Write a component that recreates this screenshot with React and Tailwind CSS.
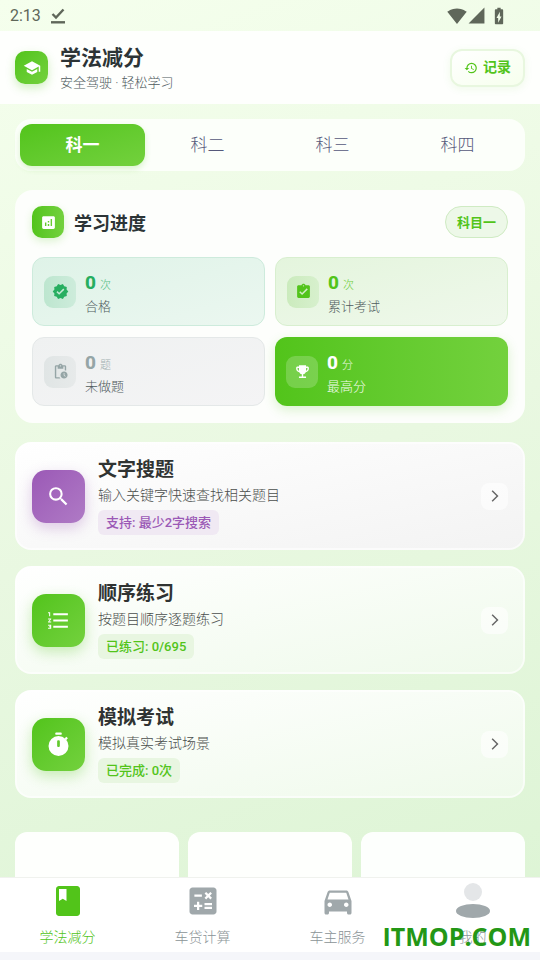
import { useState } from "react";
import {
  MdAnalytics,
  MdAssignmentTurnedIn,
  MdBatteryChargingFull,
  MdCalculate,
  MdClass,
  MdDirectionsCar,
  MdEmojiEvents,
  MdFormatListNumbered,
  MdHistory,
  MdOutlineArrowForwardIos,
  MdPendingActions,
  MdSchool,
  MdSearch,
  MdSignalCellular4Bar,
  MdSignalWifi4Bar,
  MdVerified,
} from "react-icons/md";

const SUBJECTS = ["科一", "科二", "科三", "科四"];

const STATS = [
  {
    label: "合格",
    unit: "次",
    Icon: MdVerified,
    box: "border border-[#cdebdc] bg-linear-to-br from-[#dff3e8] to-[#ebf7f0]",
    tile: "bg-linear-to-r from-[#bde6cf] to-[#cdecdb] text-[#27ae60]",
    value: "text-[#27ae60]",
    unitColor: "text-[#58bf85]",
    text: "text-[#4f5b5d]",
  },
  {
    label: "累计考试",
    unit: "次",
    Icon: MdAssignmentTurnedIn,
    box: "border border-[#d8efcf] bg-linear-to-br from-[#e4f5dd] to-[#eff8eb]",
    tile: "bg-linear-to-r from-[#cbebbd] to-[#d7f0cd] text-[#52c41a]",
    value: "text-[#52c41a]",
    unitColor: "text-[#6fce40]",
    text: "text-[#4f5b5d]",
  },
  {
    label: "未做题",
    unit: "题",
    Icon: MdPendingActions,
    box: "border border-[#e4e8e8] bg-linear-to-br from-[#eff1f1] to-[#f4f4f5]",
    tile: "bg-linear-to-r from-[#e0e5e5] to-[#e7eaea] text-[#95a5a6]",
    value: "text-[#95a5a6]",
    unitColor: "text-[#a3b0b1]",
    text: "text-[#4f5b5d]",
  },
  {
    label: "最高分",
    unit: "分",
    Icon: MdEmojiEvents,
    box: "bg-linear-to-r from-[#52c41a] to-[#73d13d] shadow-[0_4px_12px_rgba(82,196,26,0.2)]",
    tile: "bg-white/20 text-white",
    value: "text-white",
    unitColor: "text-[#eafae2]",
    text: "text-[#f6fdf2]",
  },
];

const FEATURES = [
  {
    title: "文字搜题",
    desc: "输入关键字快速查找相关题目",
    tag: "支持: 最少2字搜索",
    Icon: MdSearch,
    card: "to-[#f3f3f3]",
    tile: "from-[#9b59b6] to-[#af7ac5] shadow-[0_5px_14px_rgba(155,89,182,0.3)]",
    chip: "bg-[#f0e9f3] text-[#9b59b6]",
  },
  {
    title: "顺序练习",
    desc: "按题目顺序逐题练习",
    tag: "已练习: 0/695",
    Icon: MdFormatListNumbered,
    card: "to-[#effaeb]",
    tile: "from-[#52c41a] to-[#73d13d] shadow-[0_5px_14px_rgba(82,196,26,0.3)]",
    chip: "bg-[#e8f6e1] text-[#52c41a]",
  },
  {
    title: "模拟考试",
    desc: "模拟真实考试场景",
    tag: "已完成: 0次",
    Icon: TimerIcon,
    card: "to-[#effaeb]",
    tile: "from-[#52c41a] to-[#73d13d] shadow-[0_5px_14px_rgba(82,196,26,0.3)]",
    chip: "bg-[#e8f6e1] text-[#52c41a]",
  },
];

const NAV = [
  { label: "学法减分", Icon: MdClass },
  { label: "车贷计算", Icon: MdCalculate },
  { label: "车主服务", Icon: MdDirectionsCar },
  { label: "我的", Icon: PersonIcon },
];

export default function App() {
  const [subject, setSubject] = useState(0);

  return (
    <div className="relative flex h-screen flex-col overflow-hidden bg-linear-[160deg] from-[#f5ffed] via-[#e9f8e1] to-[#dcf4d4] font-['Roboto','Noto_Sans_CJK_SC',sans-serif]">
      <StatusBar />
      <Header />

      <main className="min-h-0 flex-1 overflow-hidden px-[15px] pt-[15px]">
        <div className="grid grid-cols-4 rounded-2xl bg-[#fcfffa] p-[5px]">
          {SUBJECTS.map((s, i) => (
            <button
              key={s}
              onClick={() => setSubject(i)}
              className={
                "h-[42px] rounded-xl pt-[2px] text-[17px] " +
                (i === subject
                  ? "bg-linear-to-br from-[#52c41a] to-[#73d13d] font-bold text-white shadow-[0_3px_6px_rgba(82,196,26,0.2)]"
                  : "font-light text-[#55587a]")
              }
            >
              {s}
            </button>
          ))}
        </div>

        <Progress />

        <div className="mt-[19px] flex flex-col gap-4">
          {FEATURES.map((f) => (
            <Feature key={f.title} {...f} />
          ))}
        </div>

        {/* Next row of shortcuts, cut off by the tab bar */}
        <div className="mt-[34px] grid grid-cols-3 gap-[9px]">
          <div className="h-28 rounded-xl bg-[#fefffd]" />
          <div className="h-28 rounded-xl bg-[#fefffd]" />
          <div className="h-28 rounded-xl bg-[#fdfffd]" />
        </div>
      </main>

      <TabBar />
      <span className="pointer-events-none absolute right-[9px] bottom-[9px] font-['Open_Sans',sans-serif] text-[25px] leading-[30px] font-bold text-[#239716]">
        ITMOP.COM
      </span>
    </div>
  );
}

function StatusBar() {
  return (
    <div className="flex h-[31px] shrink-0 items-center justify-between pr-[31px] pl-[10px] text-[#5f675a]">
      <div className="flex items-center gap-[10px]">
        <span className="text-[16px]">2:13</span>
        <svg width="14" height="16" viewBox="0 0 14 16" fill="none" stroke="currentColor">
          <path d="M1.5 6 5 9.5 12.5 1.5" strokeWidth="2.4" />
          <path d="M0 14.3h14" strokeWidth="2.4" />
        </svg>
      </div>
      <div className="flex items-center">
        <MdSignalWifi4Bar size={20} />
        <MdSignalCellular4Bar size={19} />
        <MdBatteryChargingFull size={20} className="ml-[3px]" />
      </div>
    </div>
  );
}

function Header() {
  return (
    <header className="flex h-[73px] shrink-0 items-center bg-[#fefffd] px-[15px]">
      <div className="flex size-[33px] items-center justify-center rounded-[10px] bg-linear-to-br from-[#52c41a] to-[#73d13d] text-white shadow-[0_4px_10px_rgba(82,196,26,0.25)]">
        <MdSchool size={18} />
      </div>
      <div className="ml-3 flex-1 pt-[2px]">
        <h1 className="text-[21px] leading-7 font-bold text-[#2c3436]">学法减分</h1>
        <p className="text-[13px] leading-[22px] font-light text-[#4f5b5d]">安全驾驶 · 轻松学习</p>
      </div>
      <button className="flex h-[38px] items-center gap-[5px] rounded-xl border-2 border-[#e8f7df] bg-linear-to-br from-white to-[#f6ffed] px-3 text-[14px] font-bold text-[#52c41a] shadow-[0_2px_8px_rgba(82,196,26,0.08)]">
        <MdHistory size={14} />
        记录
      </button>
    </header>
  );
}

function Progress() {
  return (
    <section className="mt-[19px] rounded-[18px] bg-[#fdfefc] p-[17px] pt-4">
      <div className="flex items-center">
        <div className="flex size-8 items-center justify-center rounded-[10px] bg-linear-to-r from-[#52c41a] to-[#73d13d] text-white shadow-[0_3px_8px_rgba(82,196,26,0.2)]">
          <MdAnalytics size={17} />
        </div>
        <h2 className="ml-[10px] flex-1 pt-[2px] text-[18px] font-bold text-[#2c3436]">学习进度</h2>
        <span className="flex h-8 items-center rounded-2xl border border-[#cfebc3] bg-[#edf8e8] px-[11px] pt-px text-[13px] font-bold text-[#52c41a]">
          科目一
        </span>
      </div>
      <div className="mt-[19px] grid grid-cols-2 gap-x-[10px] gap-y-[11px]">
        {STATS.map(({ label, unit, Icon, box, tile, value, unitColor, text }) => (
          <div key={label} className={"flex h-[69px] items-center rounded-xl px-[11px] " + box}>
            <div className={"flex size-8 items-center justify-center rounded-[9px] " + tile}>
              <Icon size={17} />
            </div>
            <div className="ml-[9px] pt-[5px]">
              <div className="flex items-baseline gap-1 leading-[22px]">
                <b className={"text-[19px] font-extrabold " + value}>0</b>
                <span className={"text-[11px] font-light " + unitColor}>{unit}</span>
              </div>
              <div className={"text-[13px] leading-5 font-light " + text}>{label}</div>
            </div>
          </div>
        ))}
      </div>
    </section>
  );
}

function Feature({ title, desc, tag, Icon, card, tile, chip }) {
  return (
    <a
      href="#"
      className={
        "flex h-[108px] items-center rounded-2xl border-2 border-white/60 bg-linear-to-br from-white bg-origin-border px-[15px] " +
        card
      }
    >
      <div
        className={"flex size-[53px] items-center justify-center rounded-[14px] bg-linear-to-br text-white " + tile}
      >
        <Icon size={25} />
      </div>
      <div className="ml-[13px] flex-1">
        <h3 className="text-[19px] leading-[26px] font-bold text-[#303332]">{title}</h3>
        <p className="text-[14px] leading-6 font-light text-[#4a4e4c]">{desc}</p>
        <span className={"mt-[3px] inline-block rounded-md px-2 text-[13px] leading-[25px] font-medium " + chip}>
          {tag}
        </span>
      </div>
      <div className="flex size-[27px] items-center justify-center rounded-lg bg-white/60 text-[#666]">
        <MdOutlineArrowForwardIos size={14} />
      </div>
    </a>
  );
}

function TimerIcon({ size }) {
  return (
    <svg width={size} height={size} viewBox="0 0 24 24" fill="currentColor">
      <rect x="9" y="0.5" width="6" height="2.2" rx="0.6" />
      <path d="M18 6 19.5 4.5 21 6 19.3 7.8z" />
      <path
        fillRule="evenodd"
        d="M12 3.8a9.6 9.6 0 1 0 0 19.2 9.6 9.6 0 0 0 0-19.2zm0 4.2c.8 0 1.3.5 1.3 1.2v4.1c0 .7-.5 1.2-1.3 1.2s-1.3-.5-1.3-1.2V9.2c0-.7.5-1.2 1.3-1.2z"
      />
    </svg>
  );
}

function PersonIcon({ size }) {
  return (
    <svg width={size} height={size} viewBox="0 0 36 36">
      <circle cx="18" cy="9" r="9" fill="#e4e6e8" />
      <ellipse cx="18" cy="28" rx="17" ry="7" fill="#a0a8ab" />
    </svg>
  );
}

function TabBar() {
  return (
    <nav className="mb-2 grid shrink-0 grid-cols-4 border-t border-[#f0f2ee] bg-white shadow-[0_8px_0_#f5f6fa]">
      {NAV.map(({ label, Icon }, i) => (
        <button
          key={label}
          className={"flex h-[74px] flex-col items-center pt-[5px] " + (i === 0 ? "text-[#52c41a]" : "text-[#a0a8ab]")}
        >
          <Icon size={36} />
          <span className={"mt-2 text-[14px] leading-5 font-light " + (i === 0 ? "" : "text-[#8a9396]")}>{label}</span>
        </button>
      ))}
    </nav>
  );
}
